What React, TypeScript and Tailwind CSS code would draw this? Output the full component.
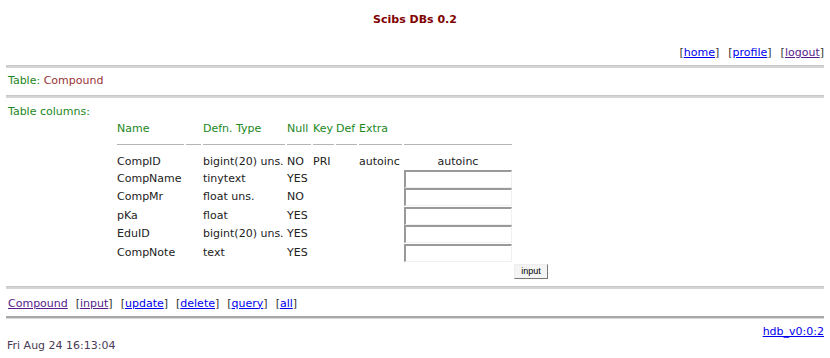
const cols = "grid grid-cols-[67px_15px_82px_24px_21px_21px_43px_108px] gap-x-[2px]";

const rows = [
  { name: "CompName", type: "tinytext", nul: "YES" },
  { name: "CompMr", type: "float uns.", nul: "NO" },
  { name: "pKa", type: "float", nul: "YES" },
  { name: "EduID", type: "bigint(20) uns.", nul: "YES" },
  { name: "CompNote", type: "text", nul: "YES" },
];

function Hr({ thick }: { thick?: boolean }) {
  return (
    <div
      className={
        thick
          ? "mx-[6px] h-[3px] border-t-2 border-b border-t-[#a8a8a8] border-b-[#d8d8d8]"
          : "mx-[6px] h-[3px] border-t border-b-2 border-t-[#c8c8c8] border-b-[#d4d4d4]"
      }
    />
  );
}

function Bracket({ label, visited }: { label: string; visited?: boolean }) {
  return (
    <span className="text-[#333]">
      [
      <a href="#" className={visited ? "text-[#551a8b] underline" : "text-[#0000ee] underline"}>
        {label}
      </a>
      ]
    </span>
  );
}

export default function App() {
  return (
    <div className="h-[358px] w-[830px] overflow-hidden bg-white font-['DejaVu_Sans',sans-serif] text-[11px] leading-[14px] text-[#222]">
      <div className="pt-[13px] text-center font-bold text-[#800000]">Scibs DBs 0.2</div>

      <div className="mt-[19px] flex justify-end gap-[9px] pr-[6px]">
        <Bracket label="home" />
        <Bracket label="profile" />
        <Bracket label="logout" visited />
      </div>

      <div className="mt-[5px]">
        <Hr />
      </div>

      <div className="mt-[6px] pl-[8px] text-[#228822]">
        Table: <span className="text-[#993333]">Compound</span>
      </div>

      <div className="mt-[7px]">
        <Hr />
      </div>

      <div className="mt-[7px] pl-[8px] text-[#228822]">Table columns:</div>

      <div className="mt-[3px] pl-[117px]">
        <div className={`${cols} text-[#228822]`}>
          <div className="h-[23px] border-b border-[#b4b4b4]">Name</div>
          <div className="h-[23px] border-b border-[#b4b4b4]" />
          <div className="h-[23px] border-b border-[#b4b4b4]">Defn. Type</div>
          <div className="h-[23px] border-b border-[#b4b4b4]">Null</div>
          <div className="h-[23px] border-b border-[#b4b4b4]">Key</div>
          <div className="h-[23px] border-b border-[#b4b4b4]">Def</div>
          <div className="h-[23px] border-b border-[#b4b4b4]">Extra</div>
          <div className="h-[23px] border-b border-[#b4b4b4]" />
        </div>

        <div className={`${cols} mt-[10px] items-center`}>
          <div>CompID</div>
          <div />
          <div className="whitespace-nowrap">bigint(20) uns.</div>
          <div>NO</div>
          <div>PRI</div>
          <div />
          <div>autoinc</div>
          <div className="text-center">autoinc</div>
        </div>

        {rows.map((r) => (
          <div key={r.name} className={`${cols} mt-[0.5px] h-[18px] items-center`}>
            <div>{r.name}</div>
            <div />
            <div className="whitespace-nowrap">{r.type}</div>
            <div>{r.nul}</div>
            <div />
            <div />
            <div />
            <input
              type="text"
              className="h-[18px] w-[108px] border-t-2 border-l-2 border-t-[#999] border-l-[#999] border-b border-r border-b-[#f0f0f0] border-r-[#f0f0f0] bg-white"
            />
          </div>
        ))}

        <div className="mt-[2px] pl-[397px]">
          <button className="h-[15px] w-[34px] border border-t-[#eee] border-l-[#eee] border-b-[#777] border-r-[#777] bg-[#f4f4f4] font-['Liberation_Sans',sans-serif] text-[9px] leading-[12px] text-black">
            input
          </button>
        </div>
      </div>

      <div className="mt-[7px]">
        <Hr />
      </div>

      <div className="mt-[8px] flex gap-[8px] pl-[8px]">
        <a href="#" className="text-[#551a8b] underline">
          Compound
        </a>
        <Bracket label="input" visited />
        <Bracket label="update" />
        <Bracket label="delete" />
        <Bracket label="query" />
        <Bracket label="all" />
      </div>

      <div className="mt-[5px]">
        <Hr thick />
      </div>

      <div className="mt-[6px] flex justify-end pr-[6px]">
        <a href="#" className="text-[#0000ee] underline">
          hdb_v0:0:2
        </a>
      </div>

      <div className="pl-[7px] text-[#4a3a55]">Fri Aug 24 16:13:04</div>
    </div>
  );
}
